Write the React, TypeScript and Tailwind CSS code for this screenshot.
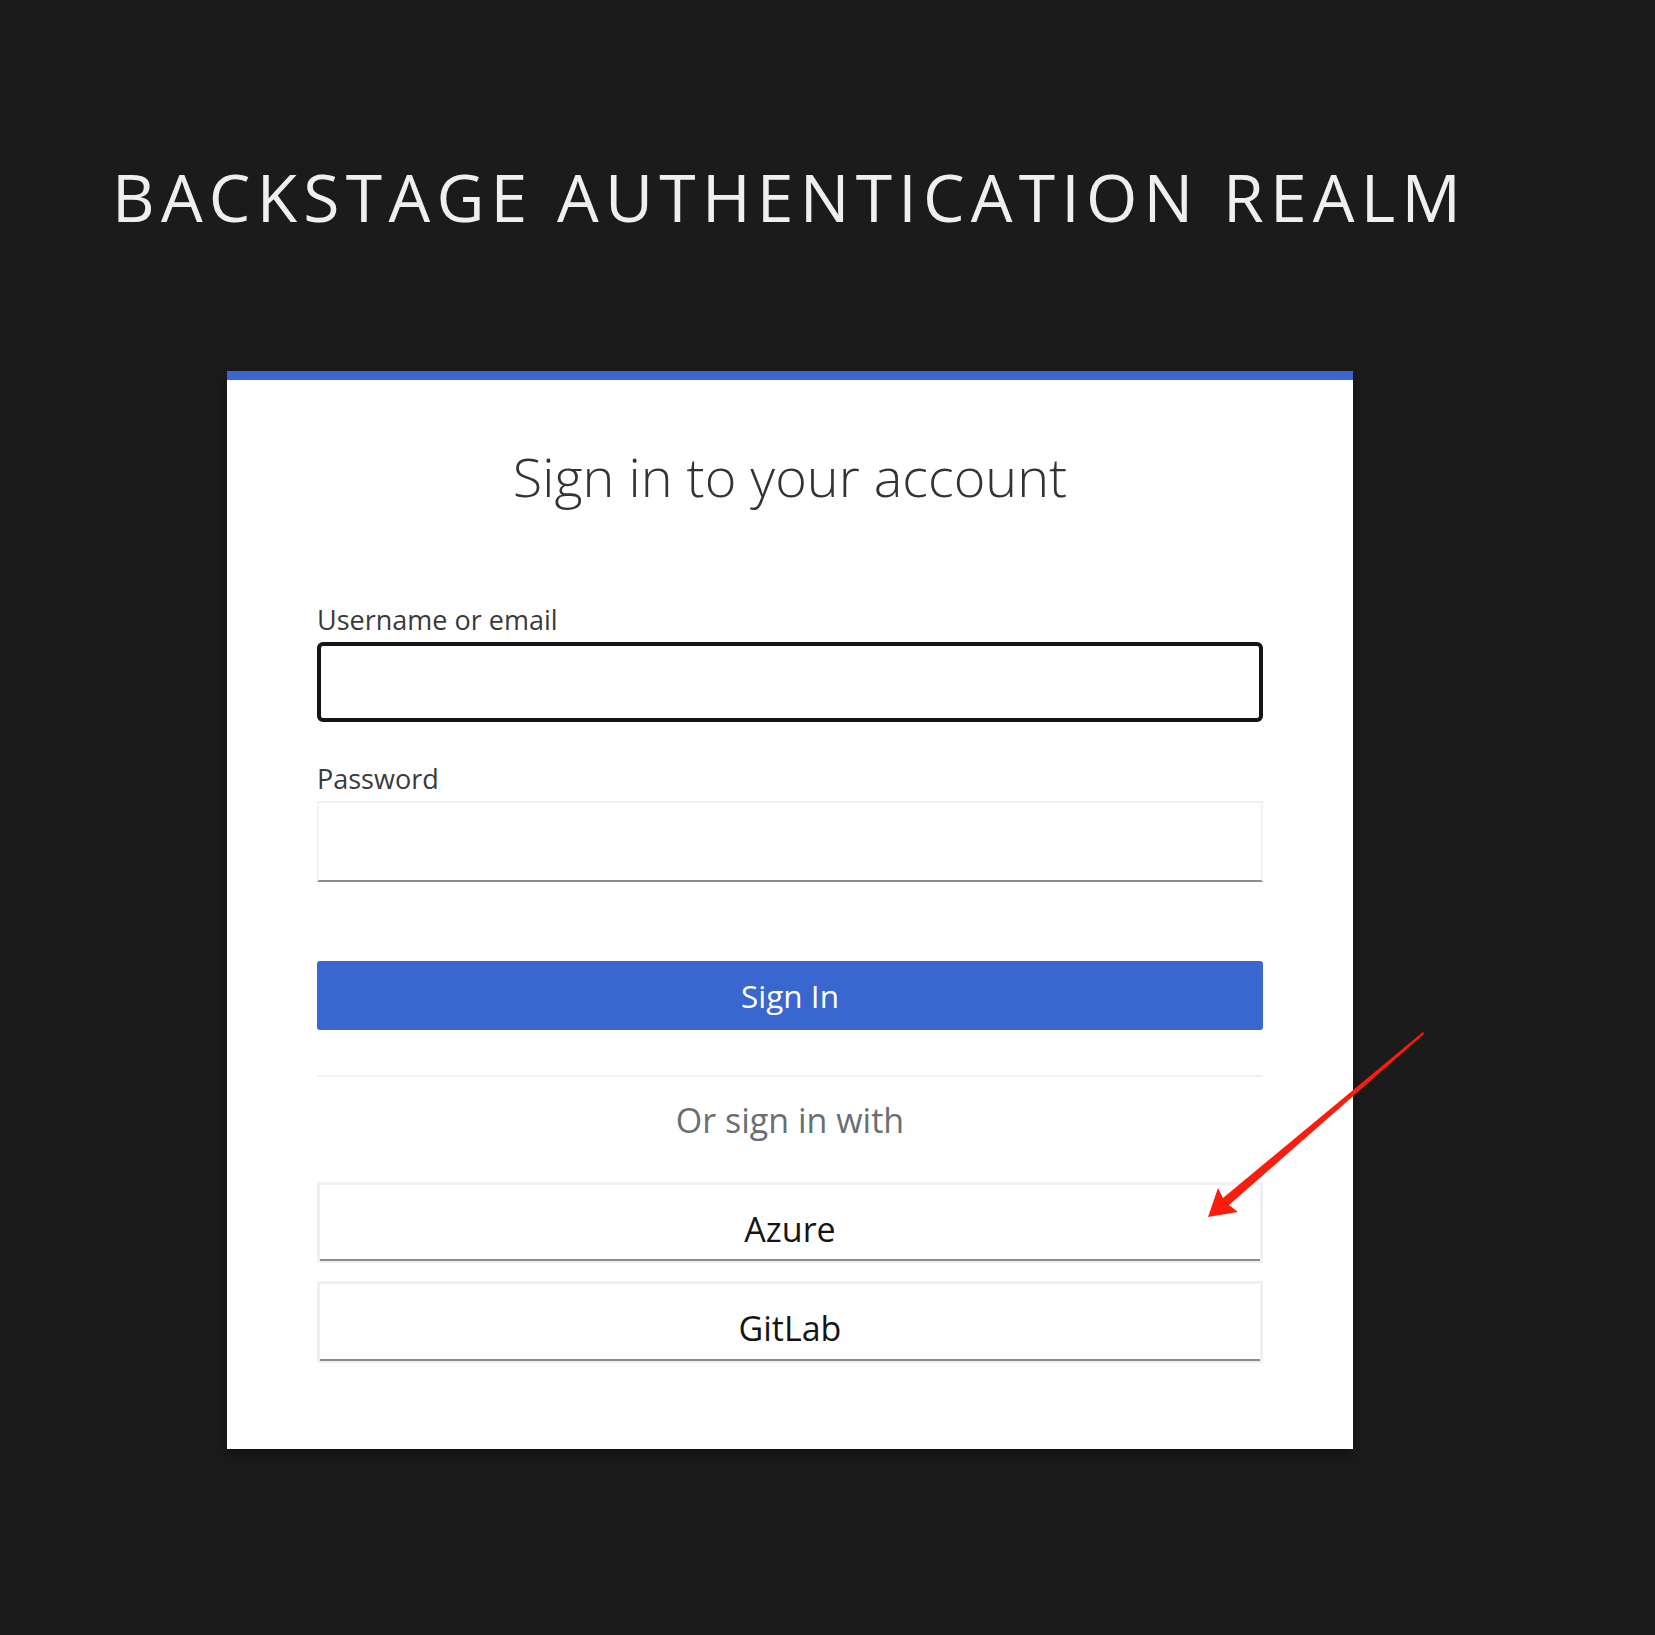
const RedArrow = () => (
  <svg
    className="absolute left-0 top-0 pointer-events-none"
    width={1655}
    height={1635}
    viewBox="0 0 1655 1635"
  >
    <path
      d="M1423 1032 L1424 1034 L1229 1205 L1238 1212 L1208 1217 L1218 1188 L1223 1198 Z"
      fill="#fa1d0e"
    />
  </svg>
);

const ProviderButton = ({ label }: { label: string }) => (
  <div className="h-full border-x-[3px] border-t-[3px] border-b-2 border-[#f0f0f0] bg-white">
    <div className="h-full pt-[27px] text-center text-[34px] leading-[34px] text-[#151515] shadow-[inset_0_-2px_0_#8a8d90]">
      {label}
    </div>
  </div>
);

export default function App() {
  return (
    <div className="relative min-h-[1635px] bg-[#1b1b1b] font-['Open_Sans',sans-serif]">
      <div className="pt-[163px] pl-[112px]">
        <h1 className="text-[66px] leading-[66px] font-normal uppercase tracking-[6.25px] text-[#efefef] whitespace-nowrap">
          Backstage Authentication Realm
        </h1>
      </div>

      <div className="mt-[142px] ml-[227px] w-[1126px] border-t-[9px] border-[#3966cf] bg-white px-[90px] pt-[69px] pb-[86px] shadow-[0_6px_12px_rgba(0,0,0,0.35)]">
        <h2 className="text-center text-[54px] leading-[54px] font-light text-[#333]">
          Sign in to your account
        </h2>

        <label className="block mt-[103px] text-[27px] leading-[27px] text-[#3a3a3a]">
          Username or email
        </label>
        <div className="mt-[9px] h-[80px] rounded-[6px] border-4 border-[#151515] bg-white" />

        <label className="block mt-[43px] text-[27px] leading-[27px] text-[#3a3a3a]">
          Password
        </label>
        <div className="mt-[9px] h-[81px] border-2 border-[#f0f0f0] border-b-[#8a8d90] bg-white" />

        <button className="mt-[79px] flex h-[69px] w-full items-center justify-center rounded-[3px] bg-[#3966cf] text-[31.5px] leading-[32px] text-white">
          Sign In
        </button>

        <div className="mt-[45px] h-[2px] bg-[#f0f0f0]" />
        <div className="mt-[26px] text-center text-[34px] leading-[34px] text-[#6a6e73]">
          Or sign in with
        </div>

        <div className="mt-[45px] h-[81px]">
          <ProviderButton label="Azure" />
        </div>
        <div className="mt-[18px] h-[82px]">
          <ProviderButton label="GitLab" />
        </div>
      </div>

      <RedArrow />
    </div>
  );
}
